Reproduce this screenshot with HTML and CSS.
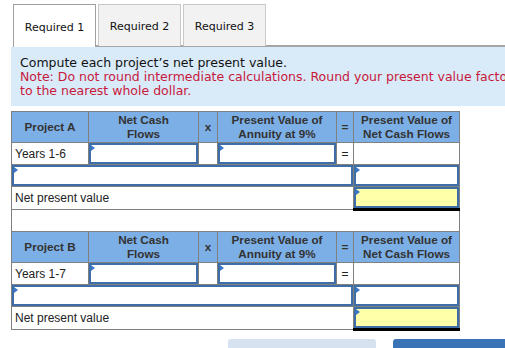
FILE: index.html
```html
<!DOCTYPE html>
<html>
<head>
<meta charset="utf-8">
<link rel="stylesheet" href="styles.css">
</head>
<body>
<div class="tabs">
  <div class="tab active">Required 1</div>
  <div class="tab">Required 2</div>
  <div class="tab">Required 3</div>
</div>
<div class="panel">
  <div class="line">Compute each project’s net present value.</div>
  <div class="line note">Note: Do not round intermediate calculations. Round your present value factor to 3 decimal places and final answers</div>
  <div class="line note">to the nearest whole dollar.</div>
</div>
<table class="grid">
  <colgroup>
    <col class="c1"><col class="c2"><col class="c3"><col class="c4"><col class="c5"><col class="c6">
  </colgroup>
  <tr class="head">
    <th>Project A</th><th>Net Cash<br>Flows</th><th>x</th><th>Present Value of<br>Annuity at 9%</th><th>=</th><th>Present Value of<br>Net Cash Flows</th>
  </tr>
  <tr class="row">
    <td class="label">Years 1-6</td>
    <td class="in"><div class="field"><input type="text"></div></td>
    <td></td>
    <td class="in"><div class="field"><input type="text"></div></td>
    <td class="op">=</td>
    <td></td>
  </tr>
  <tr class="row">
    <td class="in" colspan="5"><div class="field"><input type="text"></div></td>
    <td class="in"><div class="field"><input type="text"></div></td>
  </tr>
  <tr class="row">
    <td class="label" colspan="5">Net present value</td>
    <td class="in total"><div class="field"><input class="yellow" type="text"></div></td>
  </tr>
  <tr class="row spacer"><td colspan="6"></td></tr>
  <tr class="head">
    <th>Project B</th><th>Net Cash<br>Flows</th><th>x</th><th>Present Value of<br>Annuity at 9%</th><th>=</th><th>Present Value of<br>Net Cash Flows</th>
  </tr>
  <tr class="row">
    <td class="label">Years 1-7</td>
    <td class="in"><div class="field"><input type="text"></div></td>
    <td></td>
    <td class="in"><div class="field"><input type="text"></div></td>
    <td class="op">=</td>
    <td></td>
  </tr>
  <tr class="row">
    <td class="in" colspan="5"><div class="field"><input type="text"></div></td>
    <td class="in"><div class="field"><input type="text"></div></td>
  </tr>
  <tr class="row">
    <td class="label" colspan="5">Net present value</td>
    <td class="in total"><div class="field"><input class="yellow" type="text"></div></td>
  </tr>
</table>
<div class="buttons">
  <div class="btn prev"></div>
  <div class="btn next"></div>
</div>
</body>
</html>
```
FILE: styles.css
```css
html, body {
  margin: 0;
  padding: 0;
  overflow: hidden;
  background: #ffffff;
}
body {
  font-family: "DejaVu Sans", Verdana, sans-serif;
  width: 505px;
  height: 348px;
}
.tabs {
  display: flex;
  gap: 2px;
  margin-left: 13px;
  padding-top: 4px;
  border-bottom: 2px solid #a6a6a6;
  height: 41px;
  box-sizing: content-box;
  width: 600px;
}
.tab {
  box-sizing: border-box;
  flex-shrink: 0;
  width: 83px;
  height: 42px;
  padding-top: 2px;
  display: flex;
  align-items: center;
  justify-content: center;
  font-size: 11px;
  color: #111;
  background: #f2f2f2;
  border: 1px solid #c9c9c9;
  border-bottom: none;
}
.tab.active {
  background: #ffffff;
  border: 1px solid #a0a0a0;
  border-bottom: none;
  height: 43px;
  margin-bottom: -2px;
  position: relative;
}
.panel {
  margin-left: 11px;
  width: 640px;
  background: #d9eaf8;
  padding: 9px 0 8px 9px;
  font-size: 12.5px;
  line-height: 14px;
  color: #111;
}
.line {
  white-space: nowrap;
}
.note {
  color: #c8193c;
}
.grid {
  margin: 5px 0 0 11px;
  border-collapse: collapse;
  table-layout: fixed;
  width: 448px;
  font-family: "Liberation Sans", Arial, sans-serif;
  font-size: 12px;
  color: #222;
}
.c1 { width: 77px; }
.c2 { width: 110px; }
.c3 { width: 19px; }
.c4 { width: 119px; }
.c5 { width: 17px; }
.c6 { width: 106px; }
.grid th, .grid td {
  border: 1px solid #808080;
  padding: 0;
}
.grid th {
  background: #7cafe5;
  color: #333;
  font-size: 11.7px;
  font-weight: bold;
  line-height: 14px;
  text-align: center;
  vertical-align: middle;
}
.head {
  height: 31px;
}
.row {
  height: 22px;
}
.label {
  padding-left: 3px !important;
  text-align: left;
}
.op {
  text-align: center;
}
.spacer td {
  border-top: 1px solid #808080;
}
.field {
  position: relative;
  display: flex;
  height: 21px;
}
.field::before {
  content: "";
  position: absolute;
  left: 2px;
  top: 2px;
  border-top: 3px solid transparent;
  border-bottom: 3px solid transparent;
  border-left: 4px solid #3a78c9;
}
.field input {
  box-sizing: border-box;
  width: 100%;
  height: 100%;
  margin: 0;
  border: 2px solid #3d6ea8;
  background: #ffffff;
  padding: 0 4px;
  outline: none;
}
.field input.yellow {
  background: #ffffaa;
}
.grid td.total {
  border-top: 1px solid #000;
  border-bottom: 3px solid #000;
}
.buttons {
  display: flex;
  gap: 17px;
  margin: 8px 0 0 228px;
}
.btn {
  flex-shrink: 0;
  width: 148px;
  height: 30px;
  border-radius: 3px 3px 0 0;
}
.prev {
  background: #d7e2f0;
}
.next {
  background: #3a74b7;
  width: 160px;
}
```
